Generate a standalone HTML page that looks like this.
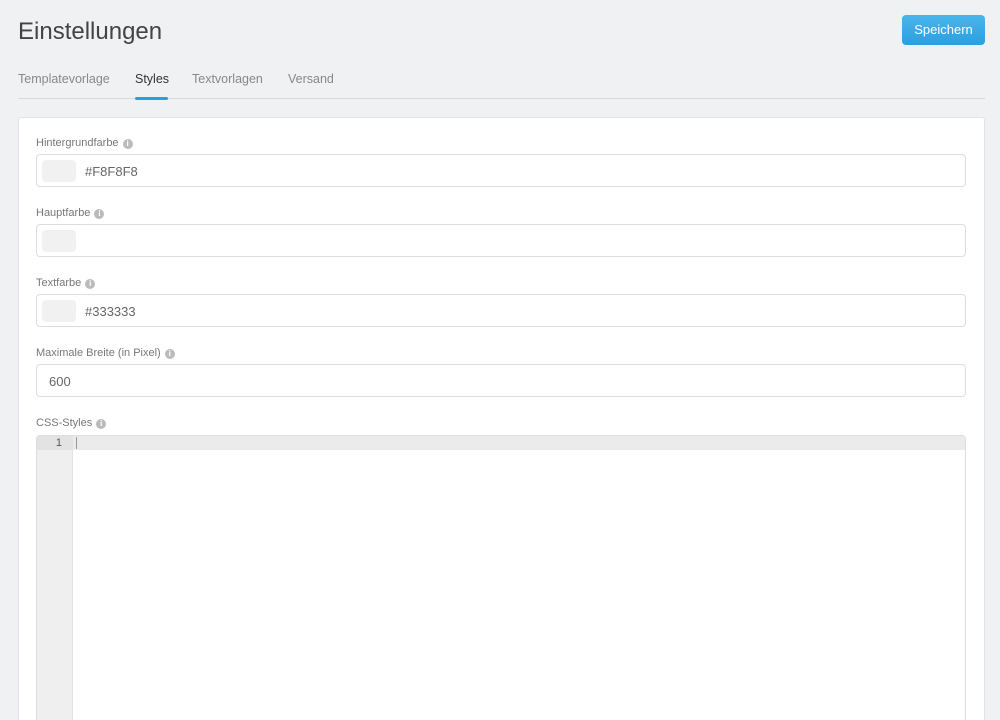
<!DOCTYPE html>
<html><head><style>
*{box-sizing:border-box;margin:0;padding:0}
html,body{width:1000px;height:720px;overflow:hidden}
body{background:#f0f1f3;font-family:"Liberation Sans",sans-serif;position:relative;color:#555}
h1{position:absolute;left:18px;top:18px;font-size:24px;font-weight:normal;color:#444}
.btn{position:absolute;left:902px;top:15px;width:83px;height:30px;border-radius:4px;background:linear-gradient(#4bb5ea,#2a9fe0);color:#fff;font-size:13px;text-align:center;line-height:30px}
.tabs{position:absolute;left:18px;top:72px;width:967px;height:27px;border-bottom:1px solid #d8d9dc;font-size:12.5px;color:#888}
.tabs span{position:absolute;top:0}
.tabs .act{color:#333}
.ul{position:absolute;left:135px;top:97px;width:33px;height:3px;background:#2a9fe0;border-radius:2px}
.card{position:absolute;left:18px;top:117px;width:967px;height:620px;background:#fff;border:1px solid #e2e3e6;border-radius:3px}
.lbl{position:absolute;left:36px;font-size:11px;color:#777}
.i{display:inline-block;width:10px;height:10px;border-radius:50%;background:#bbb;color:#fff;font-size:8px;line-height:10px;text-align:center;font-weight:bold;margin-left:4px;vertical-align:0}
.inp{position:absolute;left:36px;width:930px;height:33px;border:1px solid #dcdde0;border-radius:4px;font-size:13px;color:#666;line-height:33px;padding-left:48px}
.sw{position:absolute;left:5px;top:5px;width:34px;height:22px;background:#f1f1f1;border-radius:4px}
.ed{position:absolute;left:36px;top:435px;width:930px;height:300px;border:1px solid #dcdde0;border-radius:4px 4px 0 0;overflow:hidden}
.gut{position:absolute;left:0;top:0;width:36px;height:100%;background:#efefef;border-right:1px solid #e3e3e3}
.line{position:absolute;left:0;top:0;width:100%;height:14px;background:#ebebeb}
</style></head><body>
<h1>Einstellungen</h1>
<div class="btn">Speichern</div>
<div class="tabs"><span style="left:0">Templatevorlage</span><span class="act" style="left:117px">Styles</span><span style="left:174px">Textvorlagen</span><span style="left:270px">Versand</span></div>
<div class="ul"></div>
<div class="card"></div>
<div class="lbl" style="top:137px">Hintergrundfarbe<span class="i">i</span></div>
<div class="inp" style="top:154px"><div class="sw"></div>#F8F8F8</div>
<div class="lbl" style="top:207px">Hauptfarbe<span class="i">i</span></div>
<div class="inp" style="top:224px"><div class="sw"></div></div>
<div class="lbl" style="top:277px">Textfarbe<span class="i">i</span></div>
<div class="inp" style="top:294px"><div class="sw"></div>#333333</div>
<div class="lbl" style="top:347px">Maximale Breite (in Pixel)<span class="i">i</span></div>
<div class="inp" style="top:364px;padding-left:12px">600</div>
<div class="lbl" style="top:417px">CSS-Styles<span class="i">i</span></div>
<div class="ed"><div class="line"></div><div class="gut"></div><div style="position:absolute;left:0;top:0;width:36px;height:14px;background:#e3e3e3;font-size:11px;color:#555;text-align:right;padding-right:11px;line-height:14px">1</div><div style="position:absolute;left:39px;top:1px;width:1px;height:12px;background:#999"></div></div>
</body></html>
